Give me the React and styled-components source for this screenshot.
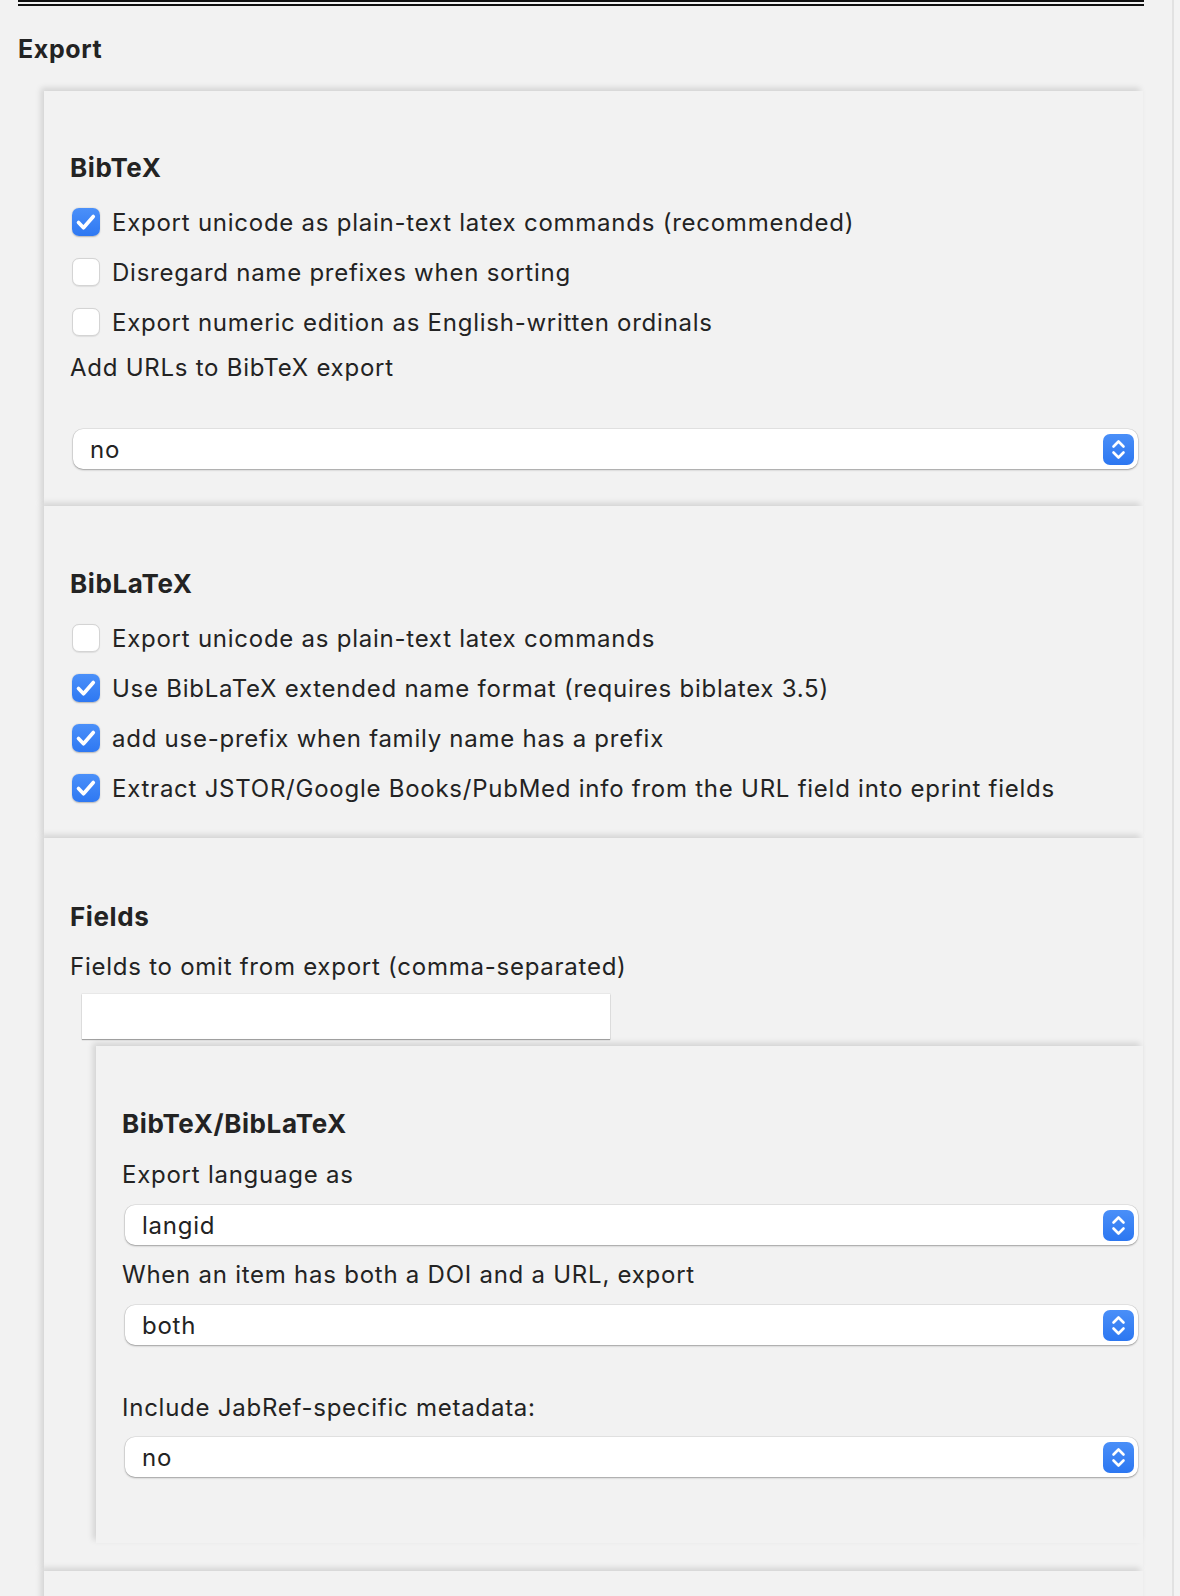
import React from "react";
import styled, { createGlobalStyle } from "styled-components";

const Global = createGlobalStyle`
  html, body { margin: 0; padding: 0; background: #f3f3f3; }
  body { font-family: Inter, "Noto Sans", "Liberation Sans", sans-serif; color: #232323; }
`;

const Page = styled.div`
  width: 1174px;
  min-height: 1596px;
  box-sizing: border-box;
  padding-left: 18px;
  background: #f2f2f2;
  border-right: 2px solid #e2e2e2;
  overflow: hidden;
`;

const TopRule = styled.div`
  width: 1126px;
  height: 2px;
  border-top: 2px solid #111;
  border-bottom: 2px solid #111;
`;

const PageTitle = styled.h2`
  margin: 27px 0 0;
  font-size: 25px;
  line-height: 32px;
  font-weight: 700;
  letter-spacing: 0.6px;
`;

const Card = styled.section`
  display: flow-root;
  margin: ${(p) => p.$mt || 0}px 0 0 ${(p) => p.$ml || 26}px;
  width: ${(p) => p.$w || 1099}px;
  box-sizing: border-box;
  padding: 0 5px ${(p) => p.$pb || 0}px 26px;
  background: #f2f2f2;
  box-shadow: -3px -3px 6px rgba(0, 0, 0, 0.13);
  position: relative;
  min-height: ${(p) => p.$minh || 0}px;
`;

const Heading = styled.h3`
  margin: ${(p) => p.$mt}px 0 0;
  font-size: 26px;
  line-height: 34px;
  font-weight: 700;
  letter-spacing: 0.6px;
`;

const CheckList = styled.div`
  margin-top: 12px;
  display: flex;
  flex-direction: column;
`;

const CheckRow = styled.label`
  display: flex;
  align-items: center;
  height: 50px;
  gap: 12px;
  padding-left: 2px;
  font-size: 24px;
  letter-spacing: 0.75px;
`;

const Box = styled.span`
  width: 28px;
  height: 28px;
  box-sizing: border-box;
  border-radius: 7px;
  flex: none;
  display: flex;
  align-items: center;
  justify-content: center;
  background: ${(p) => (p.$on ? "linear-gradient(#4b90f9, #2e78f2)" : "#fff")};
  border: ${(p) => (p.$on ? "none" : "1px solid #d4d4d4")};
  box-shadow: ${(p) => (p.$on ? "0 0.5px 1.5px rgba(0,0,0,0.25)" : "0 0.5px 1px rgba(0,0,0,0.08)")};
`;

const Label = styled.div`
  margin-top: ${(p) => p.$mt}px;
  font-size: 24px;
  line-height: 30px;
  letter-spacing: 0.75px;
`;

const SelectBox = styled.div`
  margin: ${(p) => p.$mt}px 0 0 3px;
  height: 40px;
  border-radius: 10px;
  background: #fff;
  box-shadow: 0 0 0 0.5px rgba(0, 0, 0, 0.12), 0 1px 2px rgba(0, 0, 0, 0.3);
  display: flex;
  align-items: center;
  justify-content: space-between;
  padding: 0 4px 0 17px;
  font-size: 24px;
  letter-spacing: 0.75px;
`;

const Stepper = styled.span`
  width: 31px;
  height: 31px;
  border-radius: 7px;
  background: linear-gradient(#4a8ff8, #2c77f1);
  display: flex;
  align-items: center;
  justify-content: center;
`;

const TextInput = styled.div`
  margin: 12px 0 0 12px;
  width: 528px;
  height: 45px;
  background: #fff;
  box-shadow: 0 0 0 0.5px rgba(0, 0, 0, 0.08), 0 1px 1px rgba(0, 0, 0, 0.3);
`;

function Check({ on, children }) {
  return (
    <CheckRow>
      <Box $on={on}>
        {on && (
          <svg width="28" height="28" viewBox="0 0 28 28">
            <path d="M6.5 14.5 L11.5 19.8 L21.3 8.5" fill="none" stroke="#fff" strokeWidth="3.6" strokeLinecap="round" strokeLinejoin="round" />
          </svg>
        )}
      </Box>
      {children}
    </CheckRow>
  );
}

function Select({ mt, value }) {
  return (
    <SelectBox $mt={mt}>
      <span>{value}</span>
      <Stepper>
        <svg width="31" height="31" viewBox="0 0 31 31">
          <path d="M10.5 12.5 L15.5 7.5 L20.5 12.5" fill="none" stroke="#fff" strokeWidth="2.6" strokeLinecap="round" strokeLinejoin="round" />
          <path d="M10.5 18.5 L15.5 23.5 L20.5 18.5" fill="none" stroke="#fff" strokeWidth="2.6" strokeLinecap="round" strokeLinejoin="round" />
        </svg>
      </Stepper>
    </SelectBox>
  );
}

export default function App() {
  return (
    <>
      <Global />
      <Page>
        <TopRule />
        <PageTitle>Export</PageTitle>

        <Card $mt={26} $pb={37}>
          <Heading $mt={60}>BibTeX</Heading>
          <CheckList>
            <Check on>Export unicode as plain-text latex commands (recommended)</Check>
            <Check>Disregard name prefixes when sorting</Check>
            <Check>Export numeric edition as English-written ordinals</Check>
          </CheckList>
          <Label $mt={6}>Add URLs to BibTeX export</Label>
          <Select mt={46} value="no" />
        </Card>

        <Card $pb={25}>
          <Heading $mt={61}>BibLaTeX</Heading>
          <CheckList>
            <Check>Export unicode as plain-text latex commands</Check>
            <Check on>Use BibLaTeX extended name format (requires biblatex 3.5)</Check>
            <Check on>add use-prefix when family name has a prefix</Check>
            <Check on>Extract JSTOR/Google Books/PubMed info from the URL field into eprint fields</Check>
          </CheckList>
        </Card>

        <Card $pb={28}>
          <Heading $mt={62}>Fields</Heading>
          <Label $mt={18}>Fields to omit from export (comma-separated)</Label>
          <TextInput />
          <Card $mt={7} $ml={26} $w={1047} $pb={66}>
            <Heading $mt={61}>BibTeX/BibLaTeX</Heading>
            <Label $mt={19}>Export language as</Label>
            <Select mt={15} value="langid" />
            <Label $mt={15}>When an item has both a DOI and a URL, export</Label>
            <Select mt={15} value="both" />
            <Label $mt={48}>Include JabRef-specific metadata:</Label>
            <Select mt={14} value="no" />
          </Card>
        </Card>

        <Card $minh={80} />
      </Page>
    </>
  );
}
